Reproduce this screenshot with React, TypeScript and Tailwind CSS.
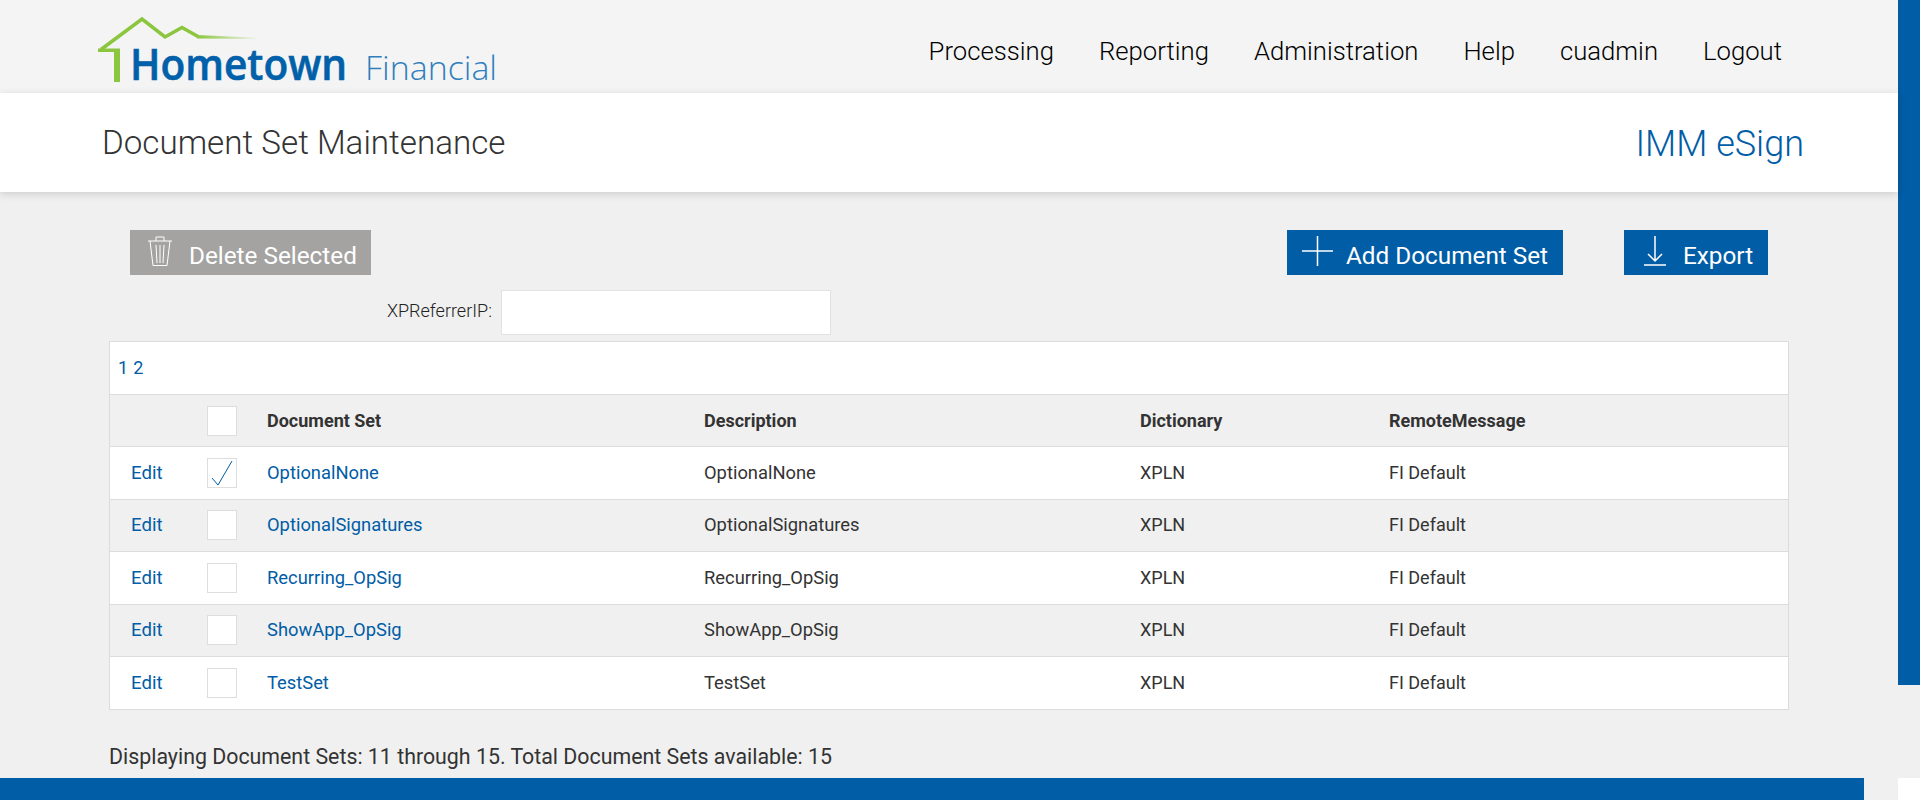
import React from "react";

const rows = [
  ["OptionalNone", true],
  ["OptionalSignatures", false],
  ["Recurring_OpSig", false],
  ["ShowApp_OpSig", false],
  ["TestSet", false],
] as const;

function Logo() {
  return (
    <svg width="420" height="93" viewBox="0 0 420 93" className="block shrink-0">
      <defs>
        <linearGradient id="fade" x1="0" x2="1" y1="0" y2="0">
          <stop offset="0" stopColor="#8cc63f" />
          <stop offset="1" stopColor="#8cc63f" stopOpacity="0" />
        </linearGradient>
      </defs>
      <path d="M21 49.5 L62 19 L85 37 L102 27.5 L118 36.5" fill="none" stroke="#8cc63f" strokeWidth="3.5" />
      <path d="M117 35 L180 38 L180 39 L117 38.5 Z" fill="url(#fade)" />
      <path d="M18 48.5 H40 V82 H34 V52 H18 Z" fill="#8cc63f" />
      <text x="50" y="80" fontFamily="'Open Sans', sans-serif" fontWeight="600" fontSize="43.5" fill="#0060a9" stroke="#0060a9" strokeWidth="0.6" textLength="217" lengthAdjust="spacingAndGlyphs">Hometown</text>
      <text x="285" y="80" fontFamily="'Open Sans', sans-serif" fontWeight="300" fontSize="33" fill="#2f7fbd" textLength="132" lengthAdjust="spacingAndGlyphs">Financial</text>
    </svg>
  );
}

function Box({ checked }: { checked?: boolean }) {
  return (
    <span className="block w-[30px] h-[30px] bg-white border border-[#dedede]">
      {checked && (
        <svg width="28" height="28" viewBox="0 0 28 28">
          <path d="M4 19 L10 26 L24 2" fill="none" stroke="#005da6" strokeWidth="1" />
        </svg>
      )}
    </span>
  );
}

function Btn({ w, icon, label, grey }: { w: string; icon: React.ReactNode; label: string; grey?: boolean }) {
  return (
    <button className={`flex items-center h-[45px] ${w} ${grey ? "bg-[#a4a3a2]" : "bg-[#005da6]"} text-white text-[24.3px]`}>
      {icon}
      <span className="pt-[7px]">{label}</span>
    </button>
  );
}

export default function App() {
  return (
    <div className="flex h-screen overflow-hidden bg-[#f0f0f0] text-[#333333] font-['Roboto',sans-serif]">
      <div className="w-[1898px] shrink-0 flex flex-col">
        <header className="h-[93px] shrink-0 bg-[#f4f4f4] flex items-center justify-between pl-[80px] pr-[116px]">
          <Logo />
          <nav className="flex gap-[45px] text-[25.7px] font-light text-black pt-[10px]">
            <span>Processing</span>
            <span>Reporting</span>
            <span>Administration</span>
            <span>Help</span>
            <span>cuadmin</span>
            <span>Logout</span>
          </nav>
        </header>
        <div className="h-[99px] shrink-0 bg-white flex items-center justify-between pl-[102px] pr-[94px] shadow-[0_2px_8px_rgba(0,0,0,0.15)] relative">
          <h1 className="text-[33.2px] font-light pt-[1px]">Document Set Maintenance</h1>
          <span className="text-[36px] font-light text-[#005da6] pt-[2px]">IMM eSign</span>
        </div>
        <main className="flex-1 min-h-0 flex flex-col pl-[109px] pr-[109px]">
          <div className="flex items-center mt-[38px] pl-[21px] pr-[21px]">
            <Btn
              grey
              w="w-[241px]"
              label="Delete Selected"
              icon={
                <svg width="26" height="30" viewBox="0 0 26 30" fill="none" stroke="#fff" strokeWidth="1" className="ml-[17px] mr-[16px] mb-[3px]">
                  <path d="M1 5 H25 M3 5 L6 29.5 H20 L23 5 M9 5 V1 H17 V5 M9 9 L10 27 M13 9 V27 M17 9 L16 27" />
                </svg>
              }
            />
            <div className="ml-auto">
              <Btn
                w="w-[276px]"
                label="Add Document Set"
                icon={
                  <svg width="31" height="30" viewBox="0 0 31 30" fill="none" stroke="#fff" strokeWidth="1.5" className="ml-[15px] mr-[13px] mb-[3px]">
                    <path d="M15.5 0 V30 M0 15 H31" />
                  </svg>
                }
              />
            </div>
            <div className="ml-[61px]">
              <Btn
                w="w-[144px]"
                label="Export"
                icon={
                  <svg width="22" height="30" viewBox="0 0 22 30" fill="none" stroke="#fff" strokeWidth="1.5" className="ml-[20px] mr-[17px] mb-[3px]">
                    <path d="M11 0 V25 M4 18 L11 25 L18 18 M0 29 H22" />
                  </svg>
                }
              />
            </div>
          </div>
          <div className="flex items-center mt-[15px] pl-[278px] h-[45px]">
            <label className="text-[18px] w-[114px] text-[#222222] font-light pb-[5px]">XPReferrerIP:</label>
            <input className="w-[330px] h-[45px] bg-white border border-[#e2e2e2] outline-none" />
          </div>
          <div className="mt-[6px] border border-[#dcdcdc] bg-white">
            <div className="h-[52px] flex items-center pl-[8px] text-[18px] gap-[5px] pb-[2px]">
              <a className="text-[#005da6]">1</a>
              <a className="text-[#005da6]">2</a>
            </div>
            <table className="w-full table-fixed border-collapse text-[18px] leading-[24px]">
              <colgroup>
                <col className="w-[87px]" />
                <col className="w-[60px]" />
                <col className="w-[437px]" />
                <col className="w-[436px]" />
                <col className="w-[249px]" />
                <col />
              </colgroup>
              <thead>
                <tr className="h-[52px] bg-[#f0f0f0] border-t border-[#dcdcdc]">
                  <th />
                  <th className="pl-[10px]"><Box /></th>
                  <th className="pl-[10px] text-left font-bold">Document Set</th>
                  <th className="pl-[10px] text-left font-bold">Description</th>
                  <th className="pl-[10px] text-left font-bold">Dictionary</th>
                  <th className="pl-[10px] text-left font-bold">RemoteMessage</th>
                </tr>
              </thead>
              <tbody>
                {rows.map(([name, checked], i) => (
                  <tr key={name} className={`h-[52.5px] border-t border-[#dcdcdc] ${i % 2 === 1 ? "bg-[#f0f0f0]" : "bg-white"}`}>
                    <td className="pl-[21px] text-[#005da6] text-[18.6px]">Edit</td>
                    <td className="pl-[10px]"><Box checked={checked} /></td>
                    <td className="pl-[10px] text-[#005da6] text-[18.35px]">{name}</td>
                    <td className="pl-[10px] text-[18.35px]">{name}</td>
                    <td className="pl-[10px]">XPLN</td>
                    <td className="pl-[10px]">FI Default</td>
                  </tr>
                ))}
              </tbody>
            </table>
          </div>
          <p className="mt-[31px] text-[21.35px]">Displaying Document Sets: 11 through 15. Total Document Sets available: 15</p>
        </main>
        <div className="h-[22px] w-[1864px] shrink-0 bg-[#005da6]" />
      </div>
      <aside className="w-[22px] shrink-0 flex flex-col justify-between">
        <div className="h-[685px] bg-[#005da6]" />
        <div className="h-[22px] bg-white" />
      </aside>
    </div>
  );
}
